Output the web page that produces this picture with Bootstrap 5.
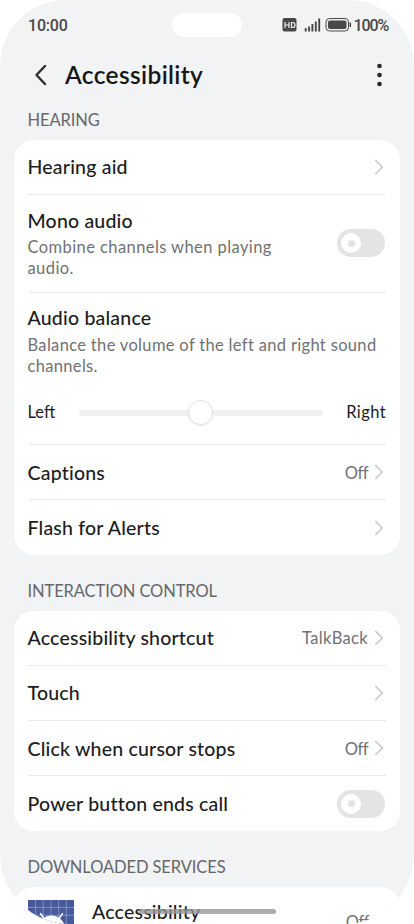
<!DOCTYPE html>
<html lang="en">
<head>
<meta charset="utf-8">
<meta name="viewport" content="width=device-width, initial-scale=1">
<title>Accessibility</title>
<link rel="stylesheet" href="https://cdn.jsdelivr.net/npm/bootstrap@5.3.0/dist/css/bootstrap.min.css">
<style>
html, body { height: 924px; overflow: hidden; background: #fff; }
body { font-family: Lato, "Noto Sans", sans-serif; color: #1c1c1e; }
.screen { width: 414px; height: 924px; background: #f2f3f5; border-radius: 66px 66px 70px 70px; }
.statusbar { height: 50px; padding: 0 25px 0 28px; color: #474849; font: 500 16px/50px Roboto, sans-serif; }
.clock, .pct { padding-top: 1px; }
.clock { width: 144px; letter-spacing: -.2px; }
.cutout { width: 70px; height: 24px; }
.pct { letter-spacing: -1.1px; margin-left: 1.5px; width: 35.5px; }
.appbar { height: 50px; padding: 0 32px 0 34px; }
.appbar h1 { font-size: 24.5px; line-height: 50px; font-weight: 600; margin-left: 17px; letter-spacing: .35px; color: #151617; }
.section-label { font-size: 16.5px; line-height: 20px; color: #66676a; padding-left: 27.5px; margin: 0; font-weight: 400; letter-spacing: -.1px; }
.label-first { padding-top: 10px; padding-bottom: 9.5px; }
.label-next { padding-top: 26px; padding-bottom: 9.3px; }
.panel { margin: 0 14px; border-radius: 20px; padding: 0 14px 0 13.5px; }
.item { border-bottom: 1px solid #e9e9ea; height: 55.15px; }
.item:last-child { border-bottom: 0; }
.item-mono { height: 98px; }
.item-balance { height: 152.5px; padding-top: 12.8px; }
.item-title { font-size: 19.5px; line-height: 25px; font-weight: 500; letter-spacing: .2px; }
.desc { font-size: 16.5px; line-height: 21px; color: #707173; letter-spacing: .42px; padding-top: 4.2px; }
.desc-wide { letter-spacing: .33px; }
.state { font-size: 16.5px; color: #707173; margin-right: 6px; padding-top: 2px; letter-spacing: .33px; }
.state-off { letter-spacing: -.5px; }
.end { font-size: 16.5px; margin-top: 23.7px; }
.end-right { letter-spacing: .4px; }
.pill { width: 48px; height: 28px; background: #e4e4e4; padding: 4px; margin-right: 1px; flex: none; }
.knob { width: 20px; height: 20px; background: #fff; }
.dot { width: 7px; height: 7px; background: #e4e4e4; }
.chev { margin-right: 2px; flex: none; }
.track { height: 6px; width: 244px; background: #f1f1f1; border-radius: 3px; }
.thumb { width: 25px; height: 25px; background: #fff; border: 1px solid #e2e2e2; box-shadow: 0 1px 2px rgba(0,0,0,.08); flex: none; }
.service { padding-top: 13.6px; height: 70px; }
.service .item-title { margin-left: 18.5px; line-height: 23px; }
.service .state { margin: 8px 17px 0 0; }
.homebar { left: 138px; top: 909px; width: 138px; height: 5px; border-radius: 3px; background: rgba(150,150,150,.78); }
</style>
</head>
<body>
<svg width="0" height="0" class="position-absolute"><symbol id="chev" viewBox="0 0 10 16"><path d="M1.800 1.500 8.300 8l-6.500 6.500" fill="none" stroke="#c9c9ca" stroke-width="1.700" stroke-linecap="round" stroke-linejoin="round"/></symbol></svg>
<main class="screen position-relative overflow-hidden">
  <header>
    <div class="statusbar d-flex align-items-center">
      <span class="clock">10:00</span>
      <span class="cutout bg-white rounded-pill"></span>
      <div class="d-flex align-items-center ms-auto">
        <svg width="70" height="16" viewBox="282 17 70 16"><rect x="282.500" y="18" width="14" height="13.500" rx="2" fill="#474849"/><path d="M285 22v6M289 22v6M285 25h4M291.500 22.500v5h1c3.300 0 3.300-5 0-5z" fill="none" stroke="#f2f3f5" stroke-width="1.200"/><path d="M305.700 31.500v-3.500M309.100 31.500v-5M312.400 31.500v-7.500M315.800 31.500v-10M319.200 31.500v-13" stroke="#474849" stroke-width="1.900"/><rect x="326" y="18.500" width="22.500" height="12.500" rx="3.500" fill="none" stroke="#474849"/><rect x="328" y="20.500" width="18.500" height="8.500" rx="2" fill="#474849"/><path d="M350.300 22.500v4.500" stroke="#474849" stroke-width="1.500"/></svg>
        <span class="pct">100%</span>
      </div>
    </div>
    <div class="appbar d-flex align-items-center">
      <svg width="14" height="24" viewBox="0 0 14 24"><path d="M11 3 2.500 12l8.500 9" fill="none" stroke="#303132" stroke-width="2.500" stroke-linecap="round" stroke-linejoin="round"/></svg>
      <h1 class="mb-0">Accessibility</h1>
      <svg class="ms-auto" width="6" height="24" viewBox="0 0 6 24"><g fill="#252627"><circle cx="3.500" cy="3" r="2.300"/><circle cx="3.500" cy="12" r="2.300"/><circle cx="3.500" cy="21" r="2.300"/></g></svg>
    </div>
  </header>

  <h2 class="section-label label-first">HEARING</h2>
  <section class="panel bg-white">
    <div class="item d-flex align-items-center justify-content-between">
      <span class="item-title">Hearing aid</span>
      <svg class="chev" width="10" height="16"><use href="#chev"/></svg>
    </div>
    <div class="item item-mono d-flex align-items-center justify-content-between">
      <div>
        <div class="item-title">Mono audio</div>
        <div class="desc">Combine channels when playing<br>audio.</div>
      </div>
      <div class="pill rounded-pill"><div class="knob rounded-circle d-flex align-items-center justify-content-center"><span class="dot rounded-circle"></span></div></div>
    </div>
    <div class="item item-balance">
      <div class="item-title">Audio balance</div>
      <div class="desc desc-wide text-nowrap">Balance the volume of the left and right sound<br>channels.</div>
      <div class="d-flex align-items-center justify-content-between end">
        <span>Left</span>
        <div class="track d-flex align-items-center justify-content-center"><span class="thumb rounded-circle"></span></div>
        <span class="end-right">Right</span>
      </div>
    </div>
    <div class="item d-flex align-items-center">
      <span class="item-title me-auto">Captions</span>
      <span class="state state-off">Off</span>
      <svg class="chev" width="10" height="16"><use href="#chev"/></svg>
    </div>
    <div class="item d-flex align-items-center justify-content-between">
      <span class="item-title">Flash for Alerts</span>
      <svg class="chev" width="10" height="16"><use href="#chev"/></svg>
    </div>
  </section>

  <h2 class="section-label label-next">INTERACTION CONTROL</h2>
  <section class="panel bg-white">
    <div class="item d-flex align-items-center">
      <span class="item-title me-auto">Accessibility shortcut</span>
      <span class="state">TalkBack</span>
      <svg class="chev" width="10" height="16"><use href="#chev"/></svg>
    </div>
    <div class="item d-flex align-items-center justify-content-between">
      <span class="item-title">Touch</span>
      <svg class="chev" width="10" height="16"><use href="#chev"/></svg>
    </div>
    <div class="item d-flex align-items-center">
      <span class="item-title me-auto">Click when cursor stops</span>
      <span class="state state-off">Off</span>
      <svg class="chev" width="10" height="16"><use href="#chev"/></svg>
    </div>
    <div class="item d-flex align-items-center justify-content-between">
      <span class="item-title">Power button ends call</span>
      <div class="pill rounded-pill"><div class="knob rounded-circle d-flex align-items-center justify-content-center"><span class="dot rounded-circle"></span></div></div>
    </div>
  </section>

  <h2 class="section-label label-next">DOWNLOADED SERVICES</h2>
  <section class="panel bg-white">
    <div class="service d-flex align-items-start">
      <svg width="46" height="46" viewBox="0 0 46 46"><path fill="#46599a" d="M0 0h46v46H0z"/><path d="M7.500 0v46M15.200 0v46M22.900 0v46M30.600 0v46M38.300 0v46M0 7.500h46M0 15.200h46" stroke="#8d9bc9" stroke-width=".8"/><path d="M10 29a13.500 13.500 0 0 1 27 0z" fill="#fff"/><path d="m12.500 13.500 4 6M34.500 13.500l-4 6" stroke="#fff" stroke-width="1.500" stroke-linecap="round"/></svg>
      <span class="item-title me-auto">Accessibility</span>
      <span class="state state-off">Off</span>
    </div>
  </section>
  <div class="homebar position-absolute"></div>
</main>
<script src="https://cdn.jsdelivr.net/npm/bootstrap@5.3.0/dist/js/bootstrap.bundle.min.js"></script>
</body>
</html>
